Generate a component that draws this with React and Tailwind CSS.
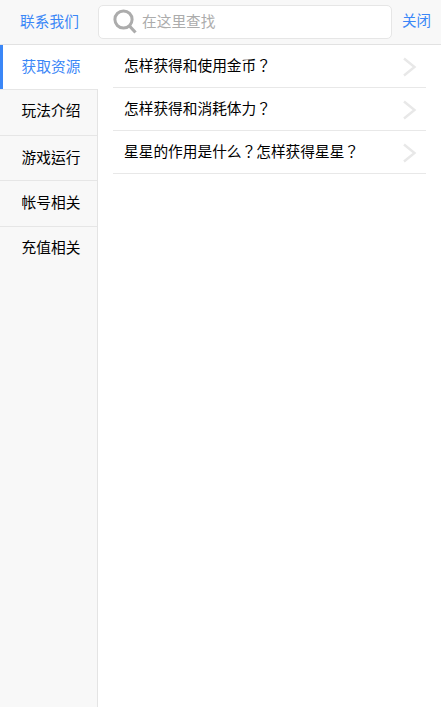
const tabs = ["玩法介绍", "游戏运行", "帐号相关", "充值相关"];
const items = ["怎样获得和使用金币？", "怎样获得和消耗体力？", "星星的作用是什么？怎样获得星星？"];

function Chevron() {
  return (
    <svg width="16" height="22" viewBox="0 0 16 22" fill="none" className="mt-[1px] shrink-0">
      <path d="M3 2.5 L13.5 11 L3 19.5" stroke="#e8e8e8" strokeWidth="2.4" />
    </svg>
  );
}

export default function App() {
  return (
    <div className="flex h-[707px] w-[441px] flex-col overflow-hidden bg-white [font-family:'Liberation_Sans','Noto_Sans_CJK_TC',sans-serif]">
      <header className="flex h-[45px] shrink-0 items-center border-b border-[#e2e2e2] bg-[#f8f8f8]">
        <div className="w-[98px] shrink-0 pl-[1px] text-center text-[14.7px] text-[#3b87f7]">联系我们</div>
        <div className="flex h-[34px] w-[294px] shrink-0 items-center rounded-[5px] border border-[#e6e6e6] bg-white pl-[14px]">
          <svg width="24" height="26" viewBox="0 0 24 26" fill="none" className="shrink-0">
            <circle cx="10.5" cy="10.5" r="8.6" stroke="#acacac" strokeWidth="3" />
            <path d="M16.5 17 L22.5 23.5" stroke="#acacac" strokeWidth="3.2" />
          </svg>
          <span className="ml-[5px] text-[14.7px] text-[#acacac]">在这里查找</span>
        </div>
        <div className="flex-1 text-center text-[14.5px] text-[#3b87f7]">关闭</div>
      </header>
      <div className="flex min-h-0 flex-1">
        <aside className="w-[98px] shrink-0 border-r border-[#e4e4e4] bg-[#f8f8f8]">
          <div className="-mr-[1px] flex h-[44px] items-center justify-center border-l-[3px] border-[#3b87f7] bg-white pl-[1px] text-[14.7px] text-[#3b87f7]">获取资源</div>
          {tabs.map((t, i) => (
            <div
              key={t}
              className={
                i === 0
                  ? "flex h-[46.5px] items-center justify-center border-y border-[#e6e6e6] pb-[2px] pl-[5px] text-[14.7px] text-black"
                  : i === 3
                    ? "flex h-[45.5px] items-center justify-center pb-[2px] pl-[5px] text-[14.7px] text-black"
                    : "flex h-[45.5px] items-center justify-center border-b border-[#e6e6e6] pl-[5px] text-[14.7px] text-black"
              }
            >
              {t}
            </div>
          ))}
        </aside>
        <main className="flex-1 px-[15px]">
          {items.map((t) => (
            <div key={t} className="flex h-[43px] items-center justify-between border-b border-[#e8e8e8] pl-[11px] pr-[9px] text-[14.7px] text-black">
              <span>{t}</span>
              <Chevron />
            </div>
          ))}
        </main>
      </div>
    </div>
  );
}
